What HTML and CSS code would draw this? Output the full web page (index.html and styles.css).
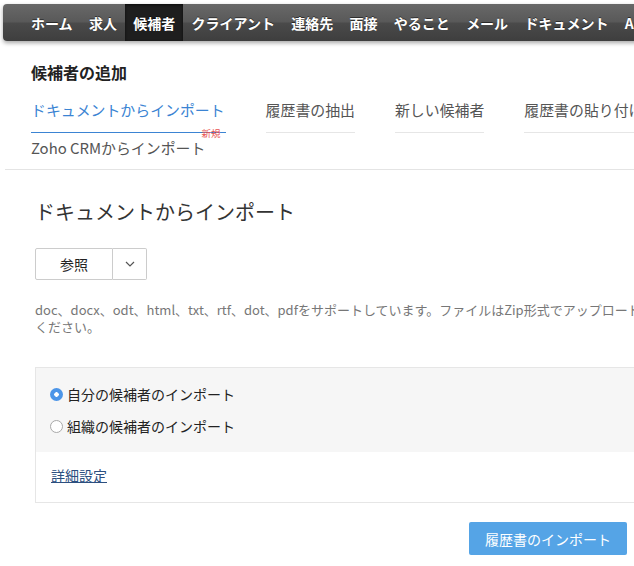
FILE: index.html
```html
<!DOCTYPE html>
<html lang="ja">
<head>
<meta charset="utf-8">
<title>候補者の追加</title>
<link rel="stylesheet" href="styles.css">
</head>
<body>
<div class="page">
  <nav class="topnav">
    <a class="nav-item">ホーム</a>
    <a class="nav-item">求人</a>
    <a class="nav-item is-active">候補者</a>
    <a class="nav-item">クライアント</a>
    <a class="nav-item">連絡先</a>
    <a class="nav-item">面接</a>
    <a class="nav-item">やること</a>
    <a class="nav-item">メール</a>
    <a class="nav-item">ドキュメント</a>
    <a class="nav-item">Analytics</a>
  </nav>

  <header class="add-head">
    <h1 class="add-title">候補者の追加</h1>
    <div class="tabs">
      <a class="tab is-active">ドキュメントからインポート<span class="badge-new">新規</span></a>
      <a class="tab">履歴書の抽出</a>
      <a class="tab">新しい候補者</a>
      <a class="tab">履歴書の貼り付け</a>
      <a class="tab tab-last">Zoho CRMからインポート</a>
    </div>
  </header>

  <main class="import">
    <h2 class="import-title">ドキュメントからインポート</h2>
    <div class="split-btn">
      <button class="split-main" type="button">参照</button>
      <button class="split-toggle" type="button" aria-label="その他">
        <svg width="10" height="6" viewBox="0 0 10 6"><path d="M1 1l4 4 4-4" fill="none" stroke="#555" stroke-width="1.2"/></svg>
      </button>
    </div>
    <p class="import-note">doc、docx、odt、html、txt、rtf、dot、pdfをサポートしています。ファイルはZip形式でアップロードしてください。</p>

    <div class="options">
      <div class="options-top">
        <label class="radio-row"><span class="radio is-checked"></span>自分の候補者のインポート</label>
        <label class="radio-row"><span class="radio"></span>組織の候補者のインポート</label>
      </div>
      <div class="options-bottom">
        <a class="adv-link">詳細設定</a>
      </div>
    </div>

    <div class="import-footer">
      <button class="primary-btn" type="button">履歴書のインポート</button>
    </div>
  </main>
</div>
</body>
</html>
```

FILE: styles.css
```css
html, body {
  margin: 0;
  padding: 0;
  overflow: hidden;
  background: #fff;
}

body {
  font-family: "Noto Sans CJK JP", "Noto Sans", sans-serif;
  color: #222;
}

.page {
  width: 760px;
}

/* top navigation */
.topnav {
  display: flex;
  align-items: stretch;
  height: 37px;
  margin: 4px 0 0 3px;
  padding-left: 20px;
  border-radius: 4px 0 0 4px;
  background: linear-gradient(to bottom, #686868 0%, #595959 48%, #4a4a4a 52%, #3e3e3e 100%);
  box-shadow: 0 2px 4px rgba(0, 0, 0, 0.35);
}

.nav-item {
  display: flex;
  align-items: center;
  padding: 0 8px;
  margin-right: 0.3px;
  font-size: 14px;
  font-weight: bold;
  color: #fff;
  text-shadow: 0 -1px 0 rgba(0, 0, 0, 0.5);
  white-space: nowrap;
}

.nav-item.is-active {
  background: #1e1e1e;
  box-shadow: inset 0 1px 3px rgba(0, 0, 0, 0.6);
}

/* add-candidate header */
.add-head {
  margin-left: 5px;
  padding: 21px 0 0 26px;
  border-bottom: 1px solid #e4e4e4;
  width: 660px;
}

.add-title {
  margin: 0;
  font-size: 16px;
  line-height: 20px;
  font-weight: bold;
  color: #222;
}

.tabs {
  display: flex;
  flex-wrap: wrap;
  column-gap: 40px;
  row-gap: 5px;
  margin-top: 18px;
}

.tab {
  position: relative;
  font-size: 14.9px;
  line-height: 20px;
  padding-bottom: 12px;
  border-bottom: 1px solid #e6e6e6;
  color: #555;
  white-space: nowrap;
}

.tab.is-active {
  color: #3b84d3;
  border-bottom-color: #3b84d3;
  padding-right: 1px;
}

.tab.tab-last {
  padding-bottom: 11px;
  border-bottom: 0;
}

.badge-new {
  position: absolute;
  top: 28px;
  right: 5px;
  font-size: 9.5px;
  line-height: 10px;
  color: #e8514f;
}

/* import section */
.import {
  padding: 28px 0 0 35px;
}

.import-title {
  margin: 0;
  font-size: 20px;
  line-height: 28px;
  font-weight: normal;
  color: #333;
}

.split-btn {
  display: flex;
  margin-top: 22px;
  height: 32px;
}

.split-main,
.split-toggle {
  font-family: inherit;
  background: #fff;
  border: 1px solid #cccccc;
  margin: 0;
  padding: 0;
  cursor: pointer;
}

.split-main {
  width: 78px;
  font-size: 14px;
  color: #222;
  border-radius: 2px 0 0 2px;
}

.split-toggle {
  width: 34px;
  border-left: 0;
  border-radius: 0 2px 2px 0;
  display: flex;
  align-items: center;
  justify-content: center;
}

.import-note {
  margin: 21px 0 0;
  width: 643px;
  font-size: 13px;
  line-height: 17px;
  color: #777;
}

.options {
  margin-top: 32px;
  width: 660px;
  border: 1px solid #e6e6e6;
}

.options-top {
  background: #f6f6f6;
  padding: 10px 14px 10px;
}

.radio-row {
  display: flex;
  align-items: center;
  height: 32px;
  font-size: 14px;
  color: #222;
}

.radio {
  box-sizing: border-box;
  width: 13px;
  height: 13px;
  margin-right: 4px;
  border-radius: 50%;
  border: 1px solid #a9a9a9;
  background: #fff;
  flex: none;
}

.radio.is-checked {
  border: 0;
  background: radial-gradient(circle, #fff 0 2px, #4c95e8 2.5px);
}

.options-bottom {
  padding: 12px 15px 17px;
  line-height: 20px;
}

.adv-link {
  font-size: 14px;
  line-height: 20px;
  color: #2c4f7f;
  text-decoration: underline;
}

.import-footer {
  display: flex;
  justify-content: flex-end;
  width: 592px;
  margin-top: 19px;
}

.primary-btn {
  font-family: inherit;
  height: 33px;
  padding: 0 16px;
  border: 0;
  border-radius: 2px;
  background: #55a4e6;
  color: #fff;
  font-size: 14px;
}
```
